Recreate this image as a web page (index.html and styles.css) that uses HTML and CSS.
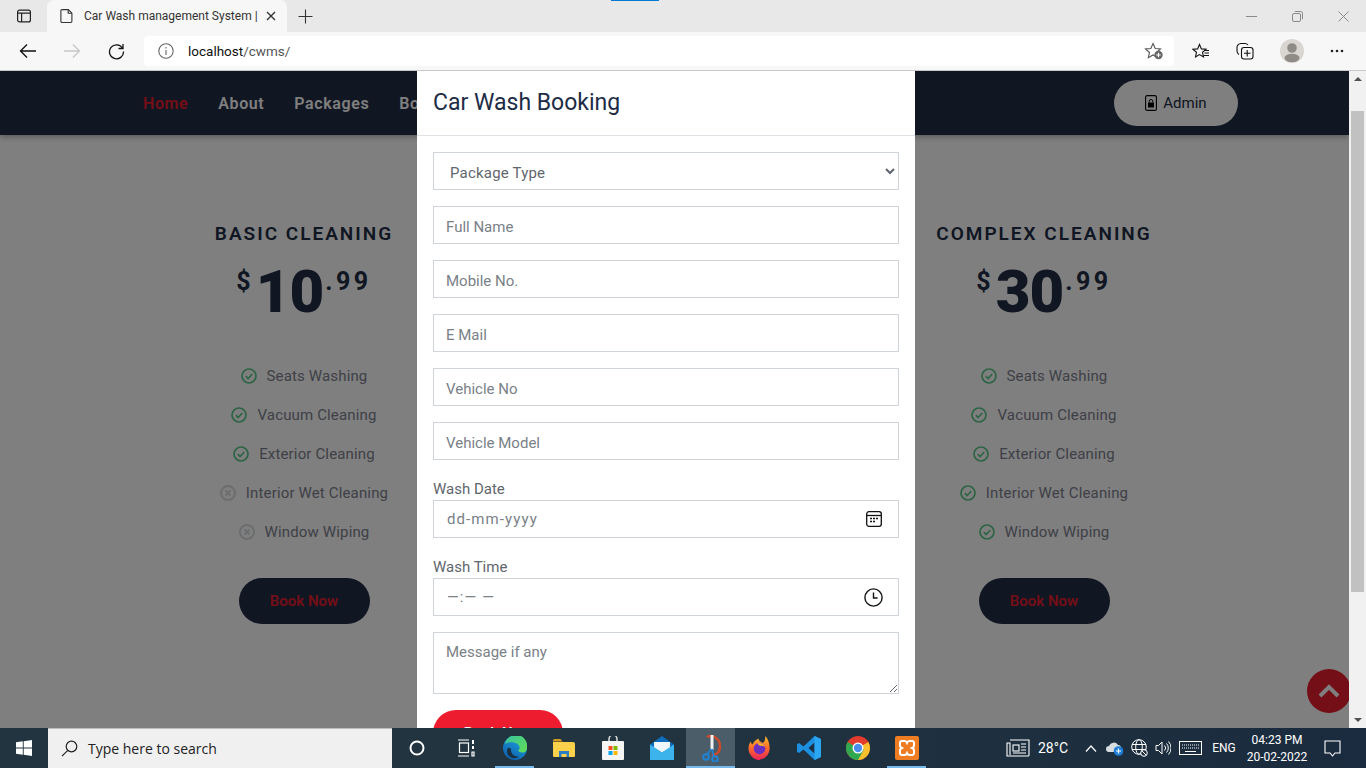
FILE: index.html
```html
<!DOCTYPE html>
<html lang="en">
<head>
  <meta charset="UTF-8" />
  <meta name="viewport" content="width=device-width, initial-scale=1.0" />
  <title>Car Wash management System</title>
  <link rel="stylesheet" href="styles.css">
</head>
<body>
  <div class="load-strip"></div>

  <!-- browser chrome -->
  <div class="tabstrip">
    <div class="tab-actions">
      <svg width="16" height="16" viewBox="0 0 16 16" fill="none" stroke="#222" stroke-width="1.2"><rect x="1.6" y="2.1" width="12.8" height="11.8" rx="2"/><path d="M1.6 5.2h12.8M5.6 5.2v8.7"/></svg>
    </div>
    <div class="tab">
      <svg width="14" height="16" viewBox="0 0 14 16" fill="none" stroke="#333" stroke-width="1.1"><path d="M2.1 1.6h6.2l3.6 3.6v8.1a1.2 1.2 0 0 1-1.2 1.2h-8.6a1.2 1.2 0 0 1-1.2-1.2v-10.5a1.2 1.2 0 0 1 1.200-1.200z"/><path d="M8.200 1.600v3.700h3.700"/></svg>
      <span class="tab-title">Car Wash management System |</span>
      <svg width="10" height="10" viewBox="0 0 10 10" stroke="#333" stroke-width="1.4"><path d="M1 1l8 8M9 1l-8 8"/></svg>
    </div>
    <div class="new-tab">
      <svg width="15" height="15" viewBox="0 0 15 15" stroke="#333" stroke-width="1.1"><path d="M7.500 0.500v14M0.500 7.500h14"/></svg>
    </div>
    <div class="window-controls">
      <svg width="11" height="11" viewBox="0 0 11 11" stroke="#8a8a8a"><path d="M0 5.500h11"/></svg>
      <svg width="11" height="11" viewBox="0 0 11 11" fill="none" stroke="#8a8a8a"><rect x="0.500" y="2.500" width="8" height="8" rx="1.500"/><path d="M2.800 0.500h6a1.700 1.700 0 0 1 1.700 1.700v6"/></svg>
      <svg width="11" height="11" viewBox="0 0 11 11" stroke="#8a8a8a"><path d="M0.500 0.500l10 10M10.500 0.500l-10 10"/></svg>
    </div>
  </div>

  <div class="toolbar">
    <div class="tool-btn">
      <svg width="18" height="16" viewBox="0 0 18 16" fill="none" stroke="#111" stroke-width="1.300"><path d="M17 8h-15.500M8 1.500l-6.500 6.500 6.500 6.500"/></svg>
    </div>
    <div class="tool-btn">
      <svg width="18" height="16" viewBox="0 0 18 16" fill="none" stroke="#c8c8c8" stroke-width="1.300"><path d="M1 8h15.500M10 1.500l6.500 6.500-6.500 6.500"/></svg>
    </div>
    <div class="tool-btn">
      <svg width="17" height="17" viewBox="0 0 17 17" fill="none" stroke="#111" stroke-width="1.300"><path d="M14.500 5.200a7 7 0 1 0 1 3.300"/><path d="M15 1v4.500h-4.500"/></svg>
    </div>
    <div class="address-bar">
      <svg width="16" height="16" viewBox="0 0 16 16" fill="none" stroke="#666" stroke-width="1.100"><circle cx="8" cy="8" r="7.200"/><path d="M8 7v5M8 4v1.400"/></svg>
      <span class="url"><b>localhost</b>/cwms/</span>
      <svg class="fav-add" width="20" height="18" viewBox="0 0 20 18" fill="none"><path d="M9 1.500l2.200 5 5.300.5-4 3.500 1.200 5.200-4.700-2.700-4.700 2.700 1.200-5.200-4-3.500 5.300-.5z" stroke="#555" stroke-width="1.100"/><circle cx="14.500" cy="13" r="4.200" fill="#666"/><path d="M14.500 10.800v4.400M12.300 13h4.400" stroke="#fff" stroke-width="1.100"/></svg>
    </div>
    <div class="tool-right">
      <svg width="18" height="17" viewBox="0 0 18 17" fill="none" stroke="#111" stroke-width="1.100"><path d="M7.500 1.500l1.900 4.400 4.600.4-3.500 3 1 4.700-4-2.400-4 2.400 1-4.700-3.500-3 4.600-.4z"/><path d="M12 7.500h5M12.500 10h4.500M11.500 12.500h5.500" stroke-width="1"/></svg>
      <svg width="18" height="18" viewBox="0 0 18 18" fill="none" stroke="#111" stroke-width="1.100"><path d="M3 12.500a4 4 0 0 1-2-3.500v-3a4 4 0 0 1 4-4.500h4a4 4 0 0 1 3 1.500"/><rect x="5.500" y="5.500" width="11.500" height="11.500" rx="2.500"/><path d="M11.200 8v6.500M8 11.200h6.500"/></svg>
      <svg class="avatar" width="24" height="24" viewBox="0 0 24 24"><circle cx="12" cy="12" r="12" fill="#d9d6d2"/><circle cx="12" cy="9" r="4.800" fill="#8f8b86"/><ellipse cx="12" cy="19" rx="7.500" ry="4.200" fill="#8f8b86"/></svg>
      <svg width="14" height="4" viewBox="0 0 14 4" fill="#222"><circle cx="2" cy="2" r="1.300"/><circle cx="7" cy="2" r="1.300"/><circle cx="12" cy="2" r="1.300"/></svg>
    </div>
  </div>

  <div class="viewport">
    <div class="page">
      <nav class="navbar">
        <a class="nav-link active">Home</a>
        <a class="nav-link">About</a>
        <a class="nav-link">Packages</a>
        <a class="nav-link">Booking</a>
        <a class="admin-btn">
          <svg width="12" height="16" viewBox="0 0 12 16" fill="none"><rect x="0.600" y="0.600" width="10.800" height="14.800" rx="1.500" stroke="#000" stroke-width="1.100"/><path d="M3 7.500h6v5h-6z" fill="#000"/><path d="M4.200 7.500v-1.200a1.800 1.800 0 0 1 3.600 0v1.200" stroke="#000"/></svg>
          Admin
        </a>
      </nav>

      <section class="pricing">
        <div class="plan">
          <h3>Basic Cleaning</h3>
          <div class="price"><span class="cur">$</span><span class="big">10</span><span class="cents">.99</span></div>
          <ul class="features">
            <li><svg class="ic-yes" viewBox="0 0 16 16"><circle cx="8" cy="8" r="7"/><path d="M4.800 8.200l2.300 2.300 4.200-4.500"/></svg>Seats Washing</li>
            <li><svg class="ic-yes" viewBox="0 0 16 16"><circle cx="8" cy="8" r="7"/><path d="M4.800 8.200l2.300 2.300 4.200-4.500"/></svg>Vacuum Cleaning</li>
            <li><svg class="ic-yes" viewBox="0 0 16 16"><circle cx="8" cy="8" r="7"/><path d="M4.800 8.200l2.300 2.300 4.200-4.500"/></svg>Exterior Cleaning</li>
            <li><svg class="ic-no" viewBox="0 0 16 16"><circle cx="8" cy="8" r="7"/><path d="M5.500 5.500l5 5M10.500 5.500l-5 5"/></svg>Interior Wet Cleaning</li>
            <li><svg class="ic-no" viewBox="0 0 16 16"><circle cx="8" cy="8" r="7"/><path d="M5.500 5.500l5 5M10.500 5.500l-5 5"/></svg>Window Wiping</li>
          </ul>
          <a class="book-btn">Book Now</a>
        </div>
        <div class="plan"></div>
        <div class="plan">
          <h3>Complex Cleaning</h3>
          <div class="price"><span class="cur">$</span><span class="big">30</span><span class="cents">.99</span></div>
          <ul class="features">
            <li><svg class="ic-yes" viewBox="0 0 16 16"><circle cx="8" cy="8" r="7"/><path d="M4.800 8.200l2.300 2.300 4.200-4.500"/></svg>Seats Washing</li>
            <li><svg class="ic-yes" viewBox="0 0 16 16"><circle cx="8" cy="8" r="7"/><path d="M4.800 8.200l2.300 2.300 4.200-4.500"/></svg>Vacuum Cleaning</li>
            <li><svg class="ic-yes" viewBox="0 0 16 16"><circle cx="8" cy="8" r="7"/><path d="M4.800 8.200l2.300 2.300 4.200-4.500"/></svg>Exterior Cleaning</li>
            <li><svg class="ic-yes" viewBox="0 0 16 16"><circle cx="8" cy="8" r="7"/><path d="M4.800 8.200l2.300 2.300 4.200-4.500"/></svg>Interior Wet Cleaning</li>
            <li><svg class="ic-yes" viewBox="0 0 16 16"><circle cx="8" cy="8" r="7"/><path d="M4.800 8.200l2.300 2.300 4.200-4.500"/></svg>Window Wiping</li>
          </ul>
          <a class="book-btn">Book Now</a>
        </div>
      </section>

      <a class="back-top">
        <svg width="22" height="14" viewBox="0 0 22 14" fill="none" stroke="#fff" stroke-width="4"><path d="M2 12l9-9 9 9"/></svg>
      </a>

      <div class="backdrop"></div>

      <!-- booking modal -->
      <div class="modal">
        <div class="modal-header">Car Wash Booking</div>
        <form class="modal-body">
          <select class="control select">
            <option>Package Type</option>
          </select>
          <input class="control" type="text" placeholder="Full Name">
          <input class="control" type="text" placeholder="Mobile No.">
          <input class="control" type="text" placeholder="E Mail">
          <input class="control" type="text" placeholder="Vehicle No">
          <input class="control" type="text" placeholder="Vehicle Model">
          <div class="labelled">
            <label>Wash Date</label>
            <div class="control picker">
              <span>dd-mm-yyyy</span>
              <svg width="18" height="18" viewBox="0 0 18 18" fill="none" stroke="#111" stroke-width="1.300"><rect x="1.700" y="1.700" width="14.600" height="14.600" rx="2.200"/><path d="M1.700 5.500h14.600"/><path d="M5 8.500h2M8 8.500h2M11 8.500h2M5 11.500h2M8 11.500h2" stroke-width="1.600"/></svg>
            </div>
          </div>
          <div class="labelled">
            <label>Wash Time</label>
            <div class="control picker">
              <span class="time-val">&#8212;:&#8212; &#8212;</span>
              <svg width="19" height="19" viewBox="0 0 19 19" fill="none" stroke="#111" stroke-width="1.400"><circle cx="9.500" cy="9.500" r="8.600"/><path d="M9.500 4.500v5.500h4"/></svg>
            </div>
          </div>
          <textarea class="control message" placeholder="Message if any"></textarea>
          <button class="submit-btn" type="button">Book Now</button>
        </form>
      </div>
    </div>

    <div class="scrollbar">
      <div class="arrow-up"></div>
      <div class="thumb"></div>
      <div class="arrow-down"></div>
    </div>
  </div>

  <!-- windows taskbar -->
  <div class="taskbar">
    <div class="start">
      <svg width="16" height="16" viewBox="0 0 16 16" fill="#fff"><path d="M0 2.300l6.800-1v6.300h-6.800zM7.700 1.200l8.300-1.200v7.600h-8.300zM0 8.500h6.800v6.300l-6.800-1zM7.700 8.500h8.300v7.500l-8.300-1.200z"/></svg>
    </div>
    <div class="search">
      <svg width="17" height="17" viewBox="0 0 17 17" fill="none" stroke="#222" stroke-width="1.200"><circle cx="10.500" cy="6.500" r="5.300"/><path d="M6.800 10.300l-5.800 5.800"/></svg>
      <span>Type here to search</span>
    </div>
    <div class="task-icon">
      <svg width="16" height="16" viewBox="0 0 16 16" fill="none" stroke="#fff" stroke-width="2"><circle cx="8" cy="8" r="6.500"/></svg>
    </div>
    <div class="task-icon">
      <svg width="18" height="18" viewBox="0 0 18 18" fill="none" stroke="#fff" stroke-width="1.200"><path d="M1 1h11M1 17h11"/><rect x="2.500" y="4" width="9" height="9.500"/><path d="M15 1h2v4h-2zM15 7h2v3h-2z" fill="#fff" stroke="none"/><path d="M15 13h2v4h-2z"/></svg>
    </div>
    <div class="task-icon running">
      <svg width="24" height="24" viewBox="0 0 24 24">
        <defs>
          <linearGradient id="edgeA" x1="0" y1="1" x2="0.600" y2="0"><stop offset="0" stop-color="#0c59a4"/><stop offset="1" stop-color="#1e9ddd"/></linearGradient>
          <linearGradient id="edgeB" x1="0" y1="0" x2="1" y2="0.800"><stop offset="0" stop-color="#35c1a5"/><stop offset="1" stop-color="#5fdc5a"/></linearGradient>
        </defs>
        <circle cx="12" cy="12" r="12" fill="url(#edgeA)"/>
        <path d="M2 8a11 11 0 0 1 22 4c0 3-2 4.500-4.500 4.500s-4-1-4.500-2c2-1 2.500-4-.5-6.500s-9-2.500-12.500 0z" fill="url(#edgeB)"/>
        <path d="M8 14c0 4 3.500 7 8 6.500-1.500 1.500-5 2.500-8 1-3-1.500-5-5-3.500-9 1-1.500 3.500-1 3.500 1.500z" fill="#1a2f42"/>
      </svg>
    </div>
    <div class="task-icon">
      <svg width="22" height="20" viewBox="0 0 22 20"><path d="M0 2.500a1.500 1.500 0 0 1 1.500-1.500h6l2 2.500h-9.500z" fill="#d19a1f"/><path d="M0 4h20a2 2 0 0 1 2 2v12a1 1 0 0 1-1 1h-20a1 1 0 0 1-1-1z" fill="#fbd14b"/><path d="M6 13h10v6h-2.500v-3h-5v3h-2.500z" fill="#2c7fc4"/></svg>
    </div>
    <div class="task-icon">
      <svg width="22" height="24" viewBox="0 0 22 24"><path d="M7 6v-3a4 4 0 0 1 8 0v3" fill="none" stroke="#ddd" stroke-width="1.500"/><rect x="0" y="5" width="22" height="19" rx="1" fill="#f5f5f5"/><rect x="6.500" y="10" width="4" height="4" fill="#f25022"/><rect x="11.500" y="10" width="4" height="4" fill="#7fba00"/><rect x="6.500" y="15" width="4" height="4" fill="#00a4ef"/><rect x="11.500" y="15" width="4" height="4" fill="#ffb900"/></svg>
    </div>
    <div class="task-icon">
      <svg width="24" height="24" viewBox="0 0 24 24"><path d="M12 0l12 8.500v15.500h-24v-15.500z" fill="#0f6cbd"/><path d="M4 6h16v5.800l-8 4.700-8-4.700z" fill="#f0f8fd"/><path d="M0 8.500l12 8 12-8v15.500h-24z" fill="#3db3ec"/></svg>
    </div>
    <div class="task-icon active">
      <svg width="20" height="28" viewBox="0 0 20 28" fill="none"><path d="M6 3c6-3 13 2 13 9s-4 9-8 9" stroke="#cc4a2a" stroke-width="2.500"/><path d="M11 1v15" stroke="#f2f2f2" stroke-width="3"/><circle cx="5" cy="23" r="2.800" stroke="#1f83d6" stroke-width="2"/><circle cx="14" cy="25" r="2.800" stroke="#1f83d6" stroke-width="2"/><path d="M6 21l4-6M13 23l-2-8" stroke="#1f83d6" stroke-width="1.600"/></svg>
    </div>
    <div class="task-icon">
      <svg width="24" height="24" viewBox="0 0 24 24">
        <defs><linearGradient id="foxA" x1="0.500" y1="0" x2="0.500" y2="1"><stop offset="0" stop-color="#ffc02e"/><stop offset="0.500" stop-color="#ff6a2a"/><stop offset="1" stop-color="#e8225c"/></linearGradient></defs>
        <path d="M12 24a11.500 11.500 0 0 1-11.500-11.500c0-3 1-5.500 2.500-7 0 1.500.5 2.500 1.500 3 1-3 4-5 6-6 0 2 1.500 3 3.500 4 2 1 3-1 3.500-6.500 2.500 3 4 7 4 11a11 11 0 0 1-9.500 12.500z" fill="url(#foxA)"/>
        <circle cx="11.500" cy="12.500" r="5.800" fill="#6a2fc0"/>
        <path d="M9 7.500c3-1.500 7 0 8 4-1-1.500-3-2-5-1.500z" fill="#ffb22e"/>
      </svg>
    </div>
    <div class="task-icon">
      <svg width="24" height="24" viewBox="0 0 24 24"><path d="M17.500 0l6.500 3v18l-6.500 3-11-10.500-4.500 3.500-2-1.200v-7.600l2-1.200 4.500 3.500z" fill="#1d8fe0"/><path d="M17.500 6.500l-6 5.500 6 5.500z" fill="#1a2f42"/><path d="M17.500 0l6.500 3v18l-6.500 3z" fill="#2ba6f2"/></svg>
    </div>
    <div class="task-icon">
      <svg width="24" height="24" viewBox="0 0 24 24"><circle cx="12" cy="12" r="12" fill="#e33b2e"/><path d="M12 12l-5.500 9.500 5.500 2.500a12 12 0 0 0 12-12 12 12 0 0 0-1.600-6z" fill="#fbc02d"/><path d="M12 12l-10.400 6a12 12 0 0 0 10.400 6l6-10.400z" fill="#2fa84f"/><path d="M1.600 6a12 12 0 0 0 0 12l10.400-6z" fill="#2fa84f"/><circle cx="12" cy="12" r="5.500" fill="#fff"/><circle cx="12" cy="12" r="4.200" fill="#4a8ff0"/></svg>
    </div>
    <div class="task-icon running">
      <svg width="24" height="24" viewBox="0 0 24 24"><rect width="24" height="24" rx="2" fill="#ef7d23"/><path d="M7 5h3c1 0 1.500 1 2 2 .5-1 1-2 2-2h3a2 2 0 0 1 2 2v3c0 1-1 1.500-2 2 1 .5 2 1 2 2v3a2 2 0 0 1-2 2h-3c-1 0-1.500-1-2-2-.5 1-1 2-2 2h-3a2 2 0 0 1-2-2v-3c0-1 1-1.500 2-2-1-.5-2-1-2-2v-3a2 2 0 0 1 2-2z" fill="none" stroke="#fff" stroke-width="2"/></svg>
    </div>

    <div class="tray">
      <div class="tray-item">
        <svg width="24" height="18" viewBox="0 0 24 18" fill="none" stroke="#fff" stroke-width="1.100"><path d="M4 1h19v15a1 1 0 0 1-1 1h-21v-13h3v12"/><rect x="7" y="6" width="6" height="6"/><path d="M15 5h5M15 8h5M15 11h5M7 14h13"/></svg>
      </div>
      <div class="tray-item temp">28&deg;C</div>
      <div class="tray-item">
        <svg width="12" height="7" viewBox="0 0 12 7" fill="none" stroke="#fff" stroke-width="1.200"><path d="M1 6.500l5-5.500 5 5.500"/></svg>
      </div>
      <div class="tray-item">
        <svg width="18" height="15" viewBox="0 0 18 15"><path d="M3 11a3 3 0 0 1 0-6 5 5 0 0 1 9-1 3 3 0 0 1 3 4h-5v3z" fill="#d8dde0"/><circle cx="12.500" cy="10" r="4.800" fill="#1f7fd8"/><path d="M10 10h5M12.500 7.500v5" stroke="#fff" stroke-width="1.200"/></svg>
      </div>
      <div class="tray-item">
        <svg width="17" height="18" viewBox="0 0 17 18" fill="none" stroke="#fff"><circle cx="8" cy="8" r="7.300"/><ellipse cx="8" cy="8" rx="3.300" ry="7.300"/><path d="M1 5.500h14M1 10.500h14"/><circle cx="13" cy="14" r="3.300" fill="#1e2f40"/><path d="M11 12l4 4"/></svg>
      </div>
      <div class="tray-item">
        <svg width="16" height="16" viewBox="0 0 16 16" fill="none" stroke="#fff"><path d="M1 5.500h2.500l3.500-3.500v12l-3.500-3.500h-2.500z"/><path d="M9.500 5.500a3.500 3.500 0 0 1 0 5M11.500 3.500a6.500 6.500 0 0 1 0 9M13.500 1.500a9.500 9.500 0 0 1 0 13"/></svg>
      </div>
      <div class="tray-item">
        <svg width="23" height="14" viewBox="0 0 23 14" fill="none" stroke="#fff"><rect x="0.500" y="0.500" width="22" height="13"/><path d="M3 4h17M3 7h17" stroke-dasharray="1 1"/><path d="M6 10.500h11"/></svg>
      </div>
      <div class="tray-item tray-text">ENG</div>
      <div class="tray-item clock"><span>04:23 PM</span><span>20-02-2022</span></div>
      <div class="tray-item">
        <svg width="17" height="17" viewBox="0 0 17 17" fill="none" stroke="#fff" stroke-width="1.100"><path d="M1 1h15v12h-5l-2.500 3-2.500-3h-5z"/></svg>
      </div>
      <div class="show-desktop"></div>
    </div>
  </div>
</body>
</html>
```

FILE: styles.css
```css
html, body {
  margin: 0;
  padding: 0;
  height: 100%;
  overflow: hidden;
}
body {
  display: flex;
  flex-direction: column;
  width: 1366px;
  height: 768px;
  position: relative;
  font-family: Roboto, "Liberation Sans", sans-serif;
  background-color: #fff;
}
svg {
  display: block;
  flex-shrink: 0;
}
.load-strip {
  position: absolute;
  left: 611px;
  top: 0;
  width: 48px;
  height: 1px;
  background-color: #0078d4;
}

/* browser chrome */
.tabstrip {
  display: flex;
  align-items: flex-end;
  height: 32px;
  background-color: #e8e8e8;
  flex-shrink: 0;
}
.tab-actions {
  width: 47px;
  height: 32px;
  display: flex;
  align-items: center;
  justify-content: center;
}
.tab {
  width: 240px;
  height: 32px;
  box-sizing: border-box;
  padding: 0 11px 0 13px;
  display: flex;
  align-items: center;
  background-color: #f7f7f7;
  border-radius: 7px 7px 0 0;
}
.tab-title {
  flex: 1;
  margin-left: 10px;
  font-size: 12px;
  color: #333;
  white-space: nowrap;
  overflow: hidden;
}
.new-tab {
  width: 36px;
  height: 32px;
  display: flex;
  align-items: center;
  justify-content: center;
}
.window-controls {
  margin-left: auto;
  padding-right: 17px;
  height: 32px;
  display: flex;
  align-items: center;
  gap: 35px;
}
.toolbar {
  display: flex;
  align-items: center;
  height: 38px;
  border-bottom: 1px solid #c9c9c9;
  background-color: #f7f7f7;
  flex-shrink: 0;
  padding-left: 6px;
}
.tool-btn {
  width: 44px;
  height: 32px;
  display: flex;
  align-items: center;
  justify-content: center;
}
.address-bar {
  margin-left: 6px;
  width: 1030px;
  height: 30px;
  box-sizing: border-box;
  padding: 0 10px 0 14px;
  display: flex;
  align-items: center;
  background-color: #fff;
  border-radius: 4px;
}
.url {
  margin-left: 14px;
  font-size: 13.500px;
  color: #555;
}
.url b {
  font-weight: 400;
  color: #111;
}
.fav-add {
  margin-left: auto;
}
.tool-right {
  flex: 1;
  display: flex;
  align-items: center;
  padding: 0 22px 0 18px;
  justify-content: space-between;
}

/* page */
.viewport {
  flex: 1;
  display: flex;
  min-height: 0;
}
.page {
  flex: 1;
  position: relative;
  overflow: hidden;
  background-color: #fff;
}
.navbar {
  height: 64px;
  display: flex;
  align-items: center;
  padding: 0 111px 0 143px;
  background-color: #202c45;
  box-shadow: 0 2px 6px rgba(0, 0, 0, 0.3);
}
.nav-link {
  margin-right: 30px;
  font-size: 16px;
  font-weight: 600;
  letter-spacing: 0.600px;
  color: #fff;
}
.nav-link.active {
  color: #e81c2e;
}
.admin-btn {
  margin-left: auto;
  width: 124px;
  height: 46px;
  border-radius: 23px;
  background-color: #fff;
  color: #202c45;
  font-size: 15px;
  font-weight: 400;
  display: flex;
  align-items: center;
  justify-content: center;
  gap: 6px;
}
.pricing {
  display: grid;
  grid-template-columns: repeat(3, 370px);
  padding: 85px 0 0 119px;
}
.plan {
  display: flex;
  flex-direction: column;
  align-items: center;
}
.plan h3 {
  margin: 0;
  height: 28px;
  line-height: 28px;
  font-size: 19px;
  font-weight: 600;
  letter-spacing: 2px;
  text-transform: uppercase;
  color: #202c45;
}
.price {
  display: flex;
  align-items: flex-start;
  height: 64px;
  margin-top: 12px;
  color: #202c45;
}
.cur, .cents {
  font-size: 25px;
  font-weight: 700;
  line-height: 26px;
  margin-top: 9px;
}
.cents {
  letter-spacing: 3.500px;
  margin-left: 2px;
}
.big {
  font-size: 60px;
  font-weight: 900;
  line-height: 64px;
  letter-spacing: -1px;
  margin-left: 5px;
}
.features {
  list-style: none;
  margin: 32px 0 0;
  padding: 0;
}
.features li {
  height: 39px;
  display: flex;
  align-items: center;
  justify-content: center;
  gap: 10px;
  font-size: 15px;
  color: #7c818e;
  letter-spacing: 0.150px;
}
.features svg {
  width: 16px;
  height: 16px;
  fill: none;
  stroke-width: 1.700;
}
.ic-yes {
  stroke: #5cc98a;
}
.features .ic-no {
  stroke: #d8dade;
  stroke-width: 2;
}
.book-btn {
  margin-top: 27px;
  width: 131px;
  height: 46px;
  border-radius: 23px;
  background-color: #202c45;
  color: #e81c2e;
  font-size: 15px;
  font-weight: 600;
  display: flex;
  align-items: center;
  justify-content: center;
}
.back-top {
  position: absolute;
  right: -2px;
  top: 598px;
  width: 44px;
  height: 44px;
  border-radius: 50%;
  background-color: #e81c2e;
  display: flex;
  align-items: center;
  justify-content: center;
}
.backdrop {
  position: absolute;
  inset: 0;
  background-color: rgba(0, 0, 0, 0.5);
}

/* modal */
.modal {
  position: absolute;
  left: 417px;
  top: 0;
  width: 498px;
  height: 760px;
  background-color: #fff;
}
.modal-header {
  height: 65px;
  box-sizing: border-box;
  padding: 0 0 2px 16px;
  display: flex;
  align-items: center;
  font-size: 23px;
  color: #202c45;
  border-bottom: 1px solid #dee2e6;
}
.modal-body {
  padding: 16px 16px 0;
  display: flex;
  flex-direction: column;
  gap: 16px;
}
.control {
  display: block;
  width: 466px;
  height: 38px;
  box-sizing: border-box;
  padding: 4px 12px 0;
  border: 1px solid #ced4da;
  border-radius: 0;
  background-color: #fff;
  font-family: Roboto, "Liberation Sans", sans-serif;
  font-size: 15px;
  color: #5f666d;
  outline: none;
}
.control::placeholder {
  color: #7a8187;
  opacity: 1;
}
.select {
  letter-spacing: 0.200px;
}
.labelled label {
  display: block;
  height: 24px;
  line-height: 26px;
  font-size: 15px;
  color: #5f666d;
}
.picker {
  display: flex;
  align-items: center;
  justify-content: space-between;
  padding: 0 15px 0 13px;
  letter-spacing: 1.100px;
  color: #7a8187;
}
.message {
  height: 62px;
  padding-top: 10px;
  resize: vertical;
}
.submit-btn {
  width: 130px;
  height: 46px;
  border: none;
  border-radius: 23px;
  background-color: #ed1c2e;
  color: #fff;
  font-family: Roboto, "Liberation Sans", sans-serif;
  font-size: 15px;
  font-weight: 600;
}

/* page scrollbar */
.scrollbar {
  width: 17px;
  flex-shrink: 0;
  display: flex;
  flex-direction: column;
  align-items: center;
  background-color: #f1f1f1;
}
.arrow-up, .arrow-down {
  width: 0;
  height: 0;
  border-left: 4px solid transparent;
  border-right: 4px solid transparent;
}
.arrow-up {
  margin-top: 6px;
  border-bottom: 4px solid #505050;
}
.arrow-down {
  margin-top: auto;
  margin-bottom: 6px;
  border-top: 4px solid #505050;
}
.thumb {
  width: 13px;
  height: 481px;
  margin-top: 30px;
  background-color: #c1c1c1;
}

/* taskbar */
.taskbar {
  height: 40px;
  flex-shrink: 0;
  display: flex;
  background: linear-gradient(90deg, #21343f 0%, #21343f 45%, #1b2b3f 100%);
  color: #fff;
}
.start {
  width: 48px;
  display: flex;
  align-items: center;
  justify-content: center;
}
.search {
  width: 344px;
  box-sizing: border-box;
  padding-left: 13px;
  display: flex;
  align-items: center;
  gap: 10px;
  background-color: #f0f0f0;
  border-top: 1px solid #bdbdbd;
  font-family: "Open Sans", sans-serif;
  font-size: 14px;
  color: #222;
}
.task-icon {
  width: 49px;
  position: relative;
  display: flex;
  align-items: center;
  justify-content: center;
}
.task-icon.running::after, .task-icon.active::after {
  content: "";
  position: absolute;
  left: 5px;
  right: 5px;
  bottom: 0;
  height: 2px;
  background-color: #76b9ed;
}
.task-icon.active {
  background-color: #4a5d69;
}
.task-icon.active::after {
  left: 0;
  right: 0;
}
.tray {
  margin-left: auto;
  display: grid;
  grid-template-columns: 28px 47px 24px 24px 24px 23px 32px 36px 70px 40px 14px;
  font-size: 13px;
}
.tray-item {
  display: flex;
  align-items: center;
  justify-content: center;
}
.temp {
  justify-content: flex-start;
  padding-left: 6px;
  font-size: 14px;
}
.tray-text {
  font-size: 12px;
}
.clock {
  flex-direction: column;
  gap: 3px;
  font-size: 12px;
}
```
